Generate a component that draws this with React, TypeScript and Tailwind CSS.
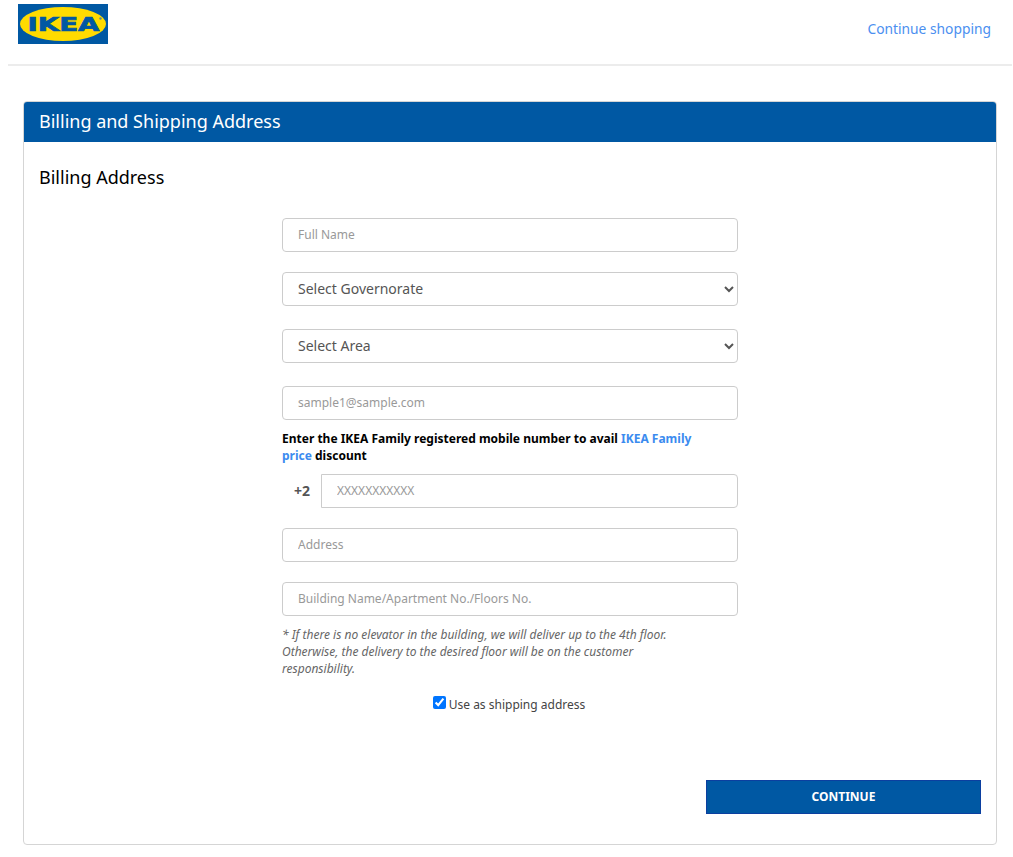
const font = { fontFamily: '"Noto Sans", "Open Sans", sans-serif' };

function IkeaLogo() {
  return (
    <svg width="90" height="40" viewBox="0 0 90 40" className="block">
      <rect width="90" height="40" fill="#0058a3" />
      <ellipse cx="45" cy="20" rx="43" ry="17" fill="#ffdb00" />
      <text
        x="45.5"
        y="27"
        textAnchor="middle"
        fontFamily='"DejaVu Sans", sans-serif'
        fontWeight="700"
        fontSize="19"
        stroke="#0058a3"
        strokeWidth="0.7"
        fill="#0058a3"
        textLength="72"
        lengthAdjust="spacingAndGlyphs"
      >
        IKEA
      </text>
      <circle cx="82.5" cy="14.5" r="1.2" fill="#5f8a8a" />
    </svg>
  );
}

const inputClass =
  "block h-[34px] w-full rounded-[4px] border border-[#ccc] bg-white px-[15px] pb-[2px] text-[12px] text-[#555] outline-none placeholder:text-[#999]";
const selectClass =
  "block h-[34px] w-full rounded-[4px] border border-[#ccc] bg-white pl-[11px] pr-[11px] pb-[2px] text-[14px] text-[#555] outline-none";

export default function App() {
  return (
    <div className="min-h-[857px] w-[1020px] bg-white pl-2 pr-2 pb-3" style={font}>
      <header className="flex h-[66px] items-start justify-between border-b-2 border-[#ececec] pt-1 pl-2.5 pr-[21px]">
        <IkeaLogo />
        <a className="mt-[15px] text-[13.8px] leading-5 text-[#4b8ff0]" href="#">
          Continue shopping
        </a>
      </header>

      <section className="mx-[15px] mt-[35px] h-[744px] overflow-hidden rounded-[4px] border border-[#d5d5d5]">
        <h1 className="flex h-10 items-center bg-[#0058a3] px-[15px] pb-[2px] text-[18px] text-white">
          Billing and Shipping Address
        </h1>
        <div className="flex flex-col px-[15px]">
          <h2 className="mt-[22px] text-[18px] leading-[26px] text-black">Billing Address</h2>

          <form className="mx-auto mt-[28px] flex w-[456px] flex-col">
            <input className={inputClass} placeholder="Full Name" />
            <select className={`${selectClass} mt-5`}>
              <option>Select Governorate</option>
            </select>
            <select className={`${selectClass} mt-[23px]`}>
              <option>Select Area</option>
            </select>
            <input className={`${inputClass} mt-[23px]`} placeholder="sample1@sample.com" />

            <p className="mt-[10px] text-[12px] leading-[17px] font-bold text-black">
              Enter the IKEA Family registered mobile number to avail{" "}
              <a className="text-[#3b8bef]" href="#">
                IKEA Family
                <br />
                price
              </a>{" "}
              discount
            </p>

            <div className="mt-[10px] flex items-center">
              <span className="w-[39px] shrink-0 pr-[11px] pb-[2px] text-right text-[14px] font-bold text-[#555]">
                +2
              </span>
              <input className={`${inputClass} rounded-l-none`} placeholder="XXXXXXXXXXX" />
            </div>

            <input className={`${inputClass} mt-5`} placeholder="Address" />
            <input className={`${inputClass} mt-5`} placeholder="Building Name/Apartment No./Floors No." />

            <p className="mt-[10px] w-[400px] text-[12px] leading-[17px] text-[#666] italic">
              * If there is no elevator in the building, we will deliver up to the 4th floor. Otherwise, the delivery to
              the desired floor will be on the customer responsibility.
            </p>

            <label className="mt-[19px] flex items-start justify-center gap-[3px] pr-[2px] text-[12px] leading-[17px] text-[#444]">
              <input type="checkbox" defaultChecked className="h-[13px] w-[13px] accent-[#0075ff]" />
              <span>Use as shipping address</span>
            </label>
          </form>

          <div className="mt-[67px] flex justify-end">
            <button
              type="button"
              className="h-[34px] w-[275px] border border-[#0b3fa0] bg-[#0058a3] text-[12px] font-bold text-white"
            >
              CONTINUE
            </button>
          </div>
        </div>
      </section>
    </div>
  );
}
